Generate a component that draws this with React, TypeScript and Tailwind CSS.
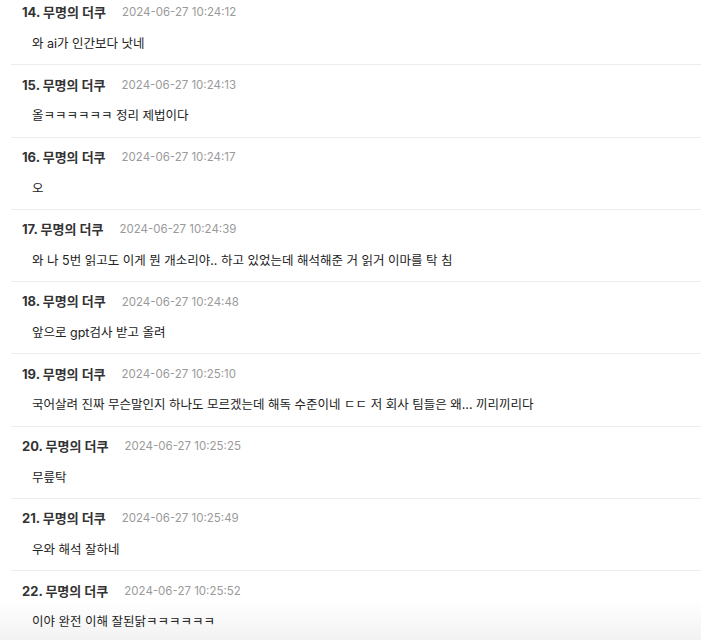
const comments = [
  { no: 14, time: "2024-06-27 10:24:12", text: "와 ai가 인간보다 낫네" },
  { no: 15, time: "2024-06-27 10:24:13", text: "올ㅋㅋㅋㅋㅋㅋ 정리 제법이다" },
  { no: 16, time: "2024-06-27 10:24:17", text: "오" },
  { no: 17, time: "2024-06-27 10:24:39", text: "와 나 5번 읽고도 이게 뭔 개소리야.. 하고 있었는데 해석해준 거 읽거 이마를 탁 침" },
  { no: 18, time: "2024-06-27 10:24:48", text: "앞으로 gpt검사 받고 올려" },
  { no: 19, time: "2024-06-27 10:25:10", text: "국어살려 진짜 무슨말인지 하나도 모르겠는데 해독 수준이네 ㄷㄷ 저 회사 팀들은 왜... 끼리끼리다" },
  { no: 20, time: "2024-06-27 10:25:25", text: "무릎탁" },
  { no: 21, time: "2024-06-27 10:25:49", text: "우와 해석 잘하네" },
  { no: 22, time: "2024-06-27 10:25:52", text: "이야 완전 이해 잘된닭ㅋㅋㅋㅋㅋㅋ" },
];

const App = () => {
  return (
    <div className="relative h-[640px] overflow-hidden bg-white font-['Inter','Noto_Sans_CJK_KR',sans-serif]">
      <div className="-mt-[7px] pl-[11px]">
        {comments.map((c) => (
          <div key={c.no} className="border-b border-[#ececec] pt-[10px] pb-[10.3px]">
            {/* header */}
            <div className="flex items-center h-5 pl-[11px]">
              <span className="text-[13px] font-bold text-[#333]">
                {c.no}. 무명의 더쿠
              </span>
              <span className="ml-4 text-[11.5px] text-[#9a9a9a]">{c.time}</span>
            </div>

            {/* body */}
            <p className="mt-[11px] h-5 leading-5 pl-[21px] text-[12.5px] text-[#222]">{c.text}</p>
          </div>
        ))}
      </div>

      {/* bottom fade */}
      <div className="absolute bottom-0 left-0 right-0 h-[40px] bg-gradient-to-b from-transparent to-[#0000000d]" />
    </div>
  );
};

export default App;
